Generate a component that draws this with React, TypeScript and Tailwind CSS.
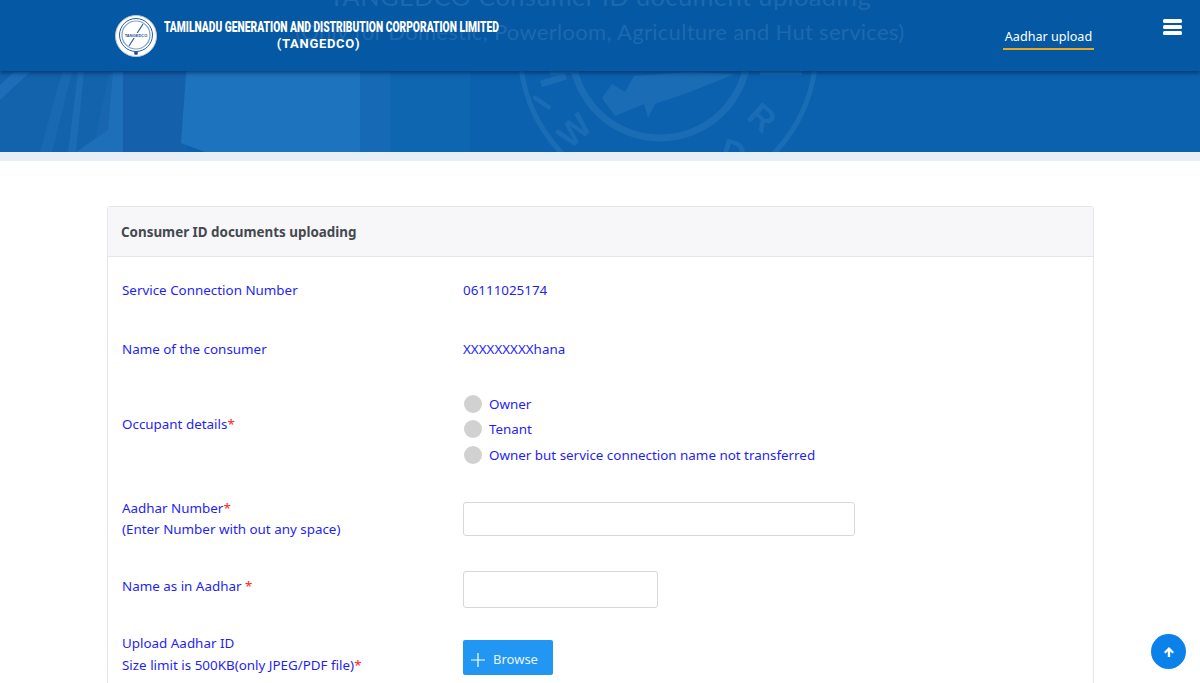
const Req = () => <span className="text-[#ff2020]">*</span>;

const Emblem = () => (
  <svg viewBox="0 0 42 42" className="h-[42px] w-[42px] shrink-0">
    <circle cx="21" cy="21" r="20.5" fill="#fff" stroke="#b9c9dc" strokeWidth="1" />
    <circle cx="21" cy="20" r="16.5" fill="none" stroke="#2a5fa5" strokeWidth="1" />
    <circle cx="21" cy="20" r="14" fill="none" stroke="#7f9fca" strokeWidth="1.2" />
    <path d="M28 9 L14 31" stroke="#2a5fa5" strokeWidth="1.2" />
    <rect x="8" y="18" width="26" height="5" fill="#fff" />
    <text x="21" y="22" textAnchor="middle" fontSize="4" fontWeight="700" fill="#1d4f94" fontFamily="'Liberation Sans', sans-serif">TANGEDCO</text>
    <circle cx="21" cy="38" r="2" fill="#27558f" />
  </svg>
);

// faint building photo and board seal behind the title
const HeroArt = () => (
  <svg className="absolute inset-0 h-full w-full" viewBox="0 0 1200 152" preserveAspectRatio="none">
    <rect x="0" y="0" width="123" height="152" fill="#1866b0" />
    <path d="M0 70 H110 L92 152 H0 Z" fill="#1362ac" />
    <path d="M0 85 L14 72 H30 L0 100 Z" fill="#1c6eb8" />
    <path d="M40 152 L62 72 H72 L52 152 Z" fill="#1968b2" />
    <path d="M68 152 L78 72 H84 L76 152 Z" fill="#1b6bb5" />
    <path d="M76 152 L108 130 L113 72 H123 V152 Z" fill="#1d6fb9" />
    <rect x="123" y="60" width="64" height="92" fill="#1560ab" />
    <path d="M187 60 H360 V152 H205 L181 143 Z" fill="#1e73be" />
    <rect x="360" y="60" width="30" height="92" fill="#1669b4" />
    <rect x="390" y="60" width="80" height="92" fill="#0e65b0" />
    <g fill="none" stroke="#1a6cb5">
      <circle cx="668" cy="50" r="148" strokeWidth="5" />
      <circle cx="660" cy="50" r="88" strokeWidth="7" />
    </g>
    <path d="M602 98 L612 84 L625 92 L634 76 L660 74 L690 72 L735 74 L690 92 L655 104 L648 118 L644 104 L615 116 Z" fill="#1a6cb5" />
    <g fill="#1a6cb5" fontFamily="'Liberation Sans', sans-serif" fontWeight="700" fontSize="34">
      <text transform="translate(548 112) rotate(-55)" fontSize="30">I</text>
      <text transform="translate(570 150) rotate(-42)">W</text>
      <text transform="translate(745 118) rotate(42)">R</text>
      <text transform="translate(718 160) rotate(18)">D</text>
    </g>
    <path d="M541 84 L566 76 M550 72 L580 68" stroke="#1a6cb5" strokeWidth="7" />
    <path d="M760 72 H802" stroke="#1a6cb5" strokeWidth="6" />
  </svg>
);

const Row = ({ label, children, className, labelClass = "" }: { label: React.ReactNode; children: React.ReactNode; className: string; labelClass?: string }) => (
  <div className={`grid grid-cols-[341px_1fr] items-center ${className}`}>
    <div className={`leading-[21.5px] ${labelClass}`}>{label}</div>
    <div>{children}</div>
  </div>
);

const Radio = ({ label }: { label: string }) => (
  <label className="flex h-[25.5px] items-center gap-[7.5px]">
    <span className="ml-[0.5px] h-[18px] w-[18px] rounded-full bg-[#d1d1d1]" />
    <span>{label}</span>
  </label>
);

export default function App() {
  return (
    <div className="h-[683px] overflow-hidden bg-white font-['Noto_Sans',sans-serif] text-[13.4px] text-[#1f1ff5]">
      <header className="relative h-[152px] overflow-hidden bg-[#0b61ae]">
        <HeroArt />
        <nav className="absolute inset-x-0 top-0 flex h-[71px] items-start bg-[#0558a3] pl-[115px] shadow-[0_2px_4px_rgba(0,30,70,0.6)]">
          <div className="absolute inset-x-0 top-0 text-center font-['Lato',sans-serif] text-[#1d69ae]">
            <div className="mt-[-19px] text-[25.4px] leading-[30px] tracking-[0.4px]">TANGEDCO  Consumer ID document uploading</div>
            <div className="mt-[6px] text-[22px] leading-[30px] tracking-[0.3px]">(Only for Domestic, Powerloom, Agriculture and Hut services)</div>
          </div>
          <div className="relative mt-[15px] flex items-start gap-[7px]">
            <Emblem />
            <div className="mt-[3px] w-[336px] font-['Roboto',sans-serif] font-black text-white">
              <div className="origin-left scale-x-[0.662] whitespace-nowrap text-[15.5px] leading-[18px]">TAMILNADU GENERATION AND DISTRIBUTION CORPORATION LIMITED</div>
              <div className="pr-[27px] text-center text-[13px] font-bold leading-[16px] tracking-[0.7px]">(TANGEDCO)</div>
            </div>
          </div>
          <a className="absolute left-[1003px] top-[27px] h-[23px] w-[91px] border-b-2 border-[#f0a51e] text-center text-[12.6px] leading-[19px] text-white">Aadhar upload</a>
          <svg className="absolute left-[1163px] top-[19px]" width="20" height="16" viewBox="0 0 20 16">
            <rect y="0" width="19" height="4" rx="1.5" fill="#fff" />
            <rect y="6" width="19" height="4" rx="1.5" fill="#fff" />
            <rect y="12" width="19" height="4" rx="1.5" fill="#fff" />
          </svg>
        </nav>
      </header>
      <div className="h-[9px] bg-[#e6eef7]" />

      <main className="ml-[107px] mt-[45px] w-[987px] rounded-[3px] border border-[#e3e6ea] pb-10">
        <div className="flex h-[50px] items-center border-b border-[#e3e6ea] bg-[#f7f7f9] pl-[13px] pt-[2px] font-bold text-[#45494e]">
          Consumer ID documents uploading
        </div>
        <div className="pl-[14px]">
          <Row label="Service Connection Number" labelClass="pt-[1px]" className="mt-[22px] h-[21px]">06111025174</Row>
          <Row label="Name of the consumer" labelClass="pt-[1px]" className="mt-[38px] h-[21px]">XXXXXXXXXhana</Row>
          <Row label={<>Occupant details<Req /></>} labelClass="pb-[10px]" className="mt-[32px]">
            <div>
              <Radio label="Owner" />
              <Radio label="Tenant" />
              <Radio label="Owner but service connection name not transferred" />
            </div>
          </Row>
          <Row label={<>Aadhar Number<Req /><br />(Enter Number with out any space)</>} className="mt-[30px]">
            <input className="block h-[34px] w-[392px] rounded-[3px] border border-[#d5d9dd] bg-white" />
          </Row>
          <Row label={<>Name as in Aadhar <Req /></>} labelClass="pb-[4px]" className="mt-[30px]">
            <input className="block h-[37px] w-[195px] rounded-[3px] border border-[#d5d9dd] bg-white" />
          </Row>
          <Row label={<>Upload Aadhar ID<br />Size limit is 500KB(only JPEG/PDF file)<Req /></>} labelClass="-mt-[6.5px] self-start" className="mt-[32px]">
            <button className="flex h-[35px] w-[90px] items-center rounded-[2px] bg-[#2196f3] pl-2 pt-[4px] text-[13px] text-[#e8f4fe]">
              <svg width="14" height="14" viewBox="0 0 14 14" className="mr-[8px] mt-[1px]"><path d="M7 0V14M0 7H14" stroke="#fff" strokeWidth="1.2" /></svg>
              Browse
            </button>
          </Row>
        </div>
      </main>

      <button className="fixed left-[1151px] top-[634px] flex h-[35px] w-[35px] items-center justify-center rounded-full bg-[#0b82ea]">
        <svg width="12" height="12" viewBox="0 0 12 12"><path d="M6 1 L11 6 L9.4 7.4 L7.2 5.3 V11 H4.8 V5.3 L2.6 7.4 L1 6 Z" fill="#fff" /></svg>
      </button>
    </div>
  );
}
